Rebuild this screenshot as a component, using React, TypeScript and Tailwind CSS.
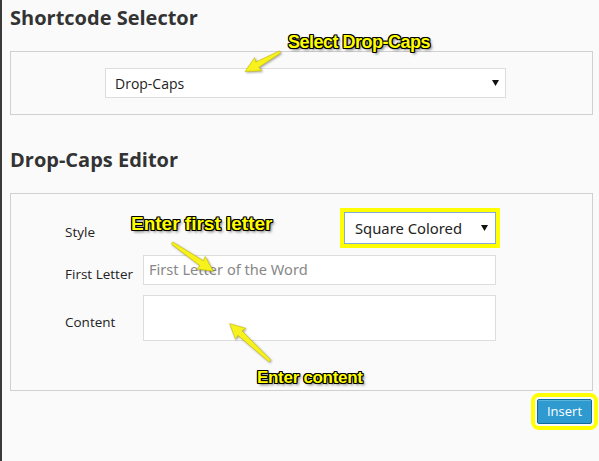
import React from 'react';

const outline =
  '[text-shadow:-1px_-1px_0_#000,1px_-1px_0_#000,-1px_1px_0_#000,1px_1px_0_#000,0_1px_0_#000,0_-1px_0_#000,1px_0_0_#000,-1px_0_0_#000,2px_2px_3px_rgba(0,0,0,0.6)]';

function Arrow({ x, y, len, angle }: { x: number; y: number; len: number; angle: number }) {
  const h = 14;
  const pts = [
    [0, -1.2],
    [len - h, -3],
    [len - h - 1, -7.5],
    [len, 0],
    [len - h - 1, 7.5],
    [len - h, 3],
    [0, 1.2],
  ]
    .map((p) => p.join(','))
    .join(' ');
  return (
    <g transform={`translate(${x} ${y}) rotate(${angle})`}>
      <polygon points={pts} fill="#f7f21c" stroke="#c9bd00" strokeWidth="0.6" strokeLinejoin="round" />
    </g>
  );
}

function Caret() {
  return (
    <svg width="7" height="6" viewBox="0 0 7 6" className="shrink-0">
      <polygon points="0,0 7,0 3.5,6" fill="#111" />
    </svg>
  );
}

export default function App() {
  return (
    <div className="relative h-[461px] w-[599px] overflow-hidden border-l-2 border-[#3a3a3a] bg-[#fafafa] font-['Open_Sans',sans-serif] text-[#333]">
      <div className="pl-2 pr-[6px] pt-1">
        <h2 className="text-[20px] font-bold leading-[28px] text-[#333]">Shortcode Selector</h2>

        <div className="mt-[19px] border border-[#d0d0d0] py-4">
          <div className="ml-[94px] flex h-[30px] w-[401px] items-center justify-between border border-[#dddddd] bg-white pl-[9px] pr-[6px] text-[14px] text-[#222]">
            <span>Drop-Caps</span>
            <Caret />
          </div>
        </div>

        <h2 className="mt-[31px] text-[20px] font-bold leading-[28px] text-[#333]">Drop-Caps Editor</h2>

        <div className="mt-[19px] border border-[#d0d0d0] pb-[49px] pl-[54px] pt-[18px]">
          <div className="flex w-[431px] flex-col gap-[11px]">
            <div className="flex items-center">
              <span className="w-[78px] pt-2 text-[13.5px] text-[#222]">Style</span>
              <div className="ml-auto flex h-[32px] w-[152px] items-center justify-between border border-[#86a9dc] bg-white pl-[10px] pr-[7px] font-['Noto_Sans',sans-serif] text-[14.8px] text-[#222] outline-4 outline-[#ffff00] outline-solid">
                <span>Square Colored</span>
                <Caret />
              </div>
            </div>
            <div className="flex items-center">
              <span className="w-[78px] pt-2 text-[13.5px] text-[#222]">First Letter</span>
              <div className="flex h-[30px] w-[353px] items-center border border-[#dddddd] bg-white pl-[5px] font-['Noto_Sans',sans-serif] text-[14.6px] text-[#888]">
                First Letter of the Word
              </div>
            </div>
            <div className="-mt-px flex items-center">
              <span className="w-[78px] pt-2 text-[13.5px] text-[#222]">Content</span>
              <div className="h-[46px] w-[353px] border border-[#dddddd] bg-white" />
            </div>
          </div>
        </div>

        <div className="mt-2 flex justify-end pr-px">
          <button className="h-[25px] w-[55px] rounded-[2px] border border-[#0f6a9c] bg-[#2e9ad0] text-[13px] leading-none text-white shadow-[inset_0_1px_0_rgba(120,200,230,0.6)] outline-4 outline-offset-2 outline-[#ffff00] outline-solid">
            Insert
          </button>
        </div>
      </div>

      {/* annotations */}
      <svg className="pointer-events-none absolute inset-0 drop-shadow-[1px_1px_1px_rgba(0,0,0,0.35)]" width="599" height="461">
        <Arrow x={278} y={52} len={40} angle={150.8} />
        <Arrow x={170} y={243} len={50} angle={34.3} />
        <Arrow x={268} y={361} len={55} angle={-137.2} />
      </svg>
      <span className={`absolute left-[286px] top-[33px] font-['Liberation_Sans',sans-serif] text-[18px] font-bold leading-none tracking-[-0.5px] text-[#ffff00] ${outline}`}>
        Select Drop-Caps
      </span>
      <span className={`absolute left-[129px] top-[214px] font-['Liberation_Sans',sans-serif] text-[19px] font-bold leading-none text-[#ffff00] ${outline}`}>
        Enter first letter
      </span>
      <span className={`absolute left-[255px] top-[369px] font-['Liberation_Sans',sans-serif] text-[17px] font-bold leading-none tracking-[-0.3px] text-[#ffff00] ${outline}`}>
        Enter content
      </span>
    </div>
  );
}
